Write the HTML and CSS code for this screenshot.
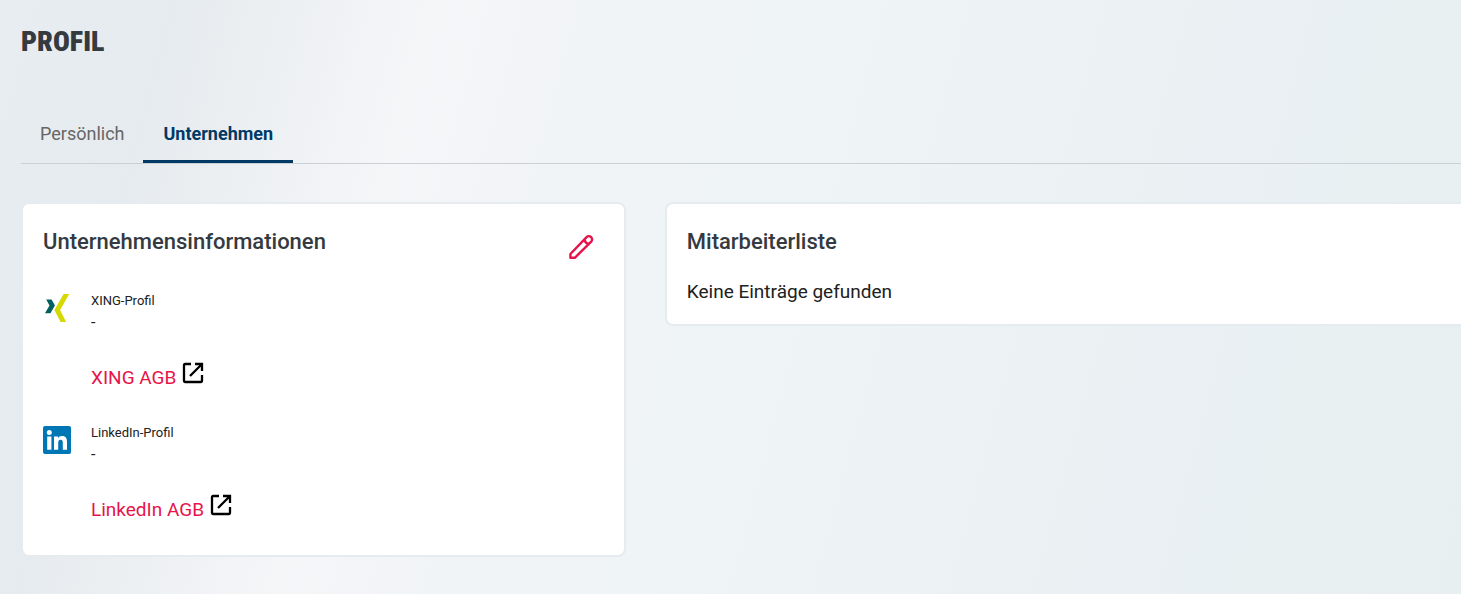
FILE: index.html
```html
<!DOCTYPE html>
<html lang="de">
<head>
    <meta charset="UTF-8" />
    <meta name="viewport" content="width=device-width, initial-scale=1.0" />
    <link rel="stylesheet" href="styles.css">
    <title>Profil</title>
</head>
<body>
    <main class="page">
        <h1>PROFIL</h1>

        <nav class="tabs">
            <a href="#persoenlich" class="tab">Persönlich</a>
            <a href="#unternehmen" class="tab active" aria-current="page">Unternehmen</a>
        </nav>

        <div class="cards">
            <section class="card">
                <div class="card-header">
                    <h2>Unternehmensinformationen</h2>
                    <button type="button" class="edit" aria-label="Bearbeiten">
                        <svg viewBox="0 0 26 26" width="26" height="26" fill="none" stroke="#e6144b" stroke-width="2.4" stroke-linejoin="round">
                            <path d="M2.4 20 L18.6 3.2 A3.1 3.1 0 0 1 23.2 7.6 L6.8 23.8 H2.4 Z" />
                            <path d="M16.4 5.4 Q17.2 9.2 21 10" />
                        </svg>
                    </button>
                </div>

                <div class="profile">
                    <svg class="logo" viewBox="0 0 28 30" width="28" height="30">
                        <path fill="#005f5f" d="M3.2 6.4 H8.6 L11.9 12.5 L7.4 20.3 H2 L6.5 12.5 Z" />
                        <path fill="#d5d900" d="M20.6 1 H26.2 L17.1 17 L23.1 29 H17.6 L11.4 17 Z" />
                    </svg>
                    <div class="profile-text">
                        <span class="label">XING-Profil</span>
                        <span class="value">-</span>
                        <a href="#xing-agb" class="terms">XING AGB<svg viewBox="0 0 22 22" width="22" height="22" fill="none" stroke="#000" stroke-width="2.3">
                                <path d="M9 2 H3 Q2 2 2 3 V19 Q2 20 3 20 H19 Q20 20 20 19 V13" />
                                <path d="M8 14 L19.5 2.5 M13 2 H20 V9" />
                            </svg></a>
                    </div>
                </div>

                <div class="profile">
                    <svg class="logo" viewBox="0 0 28 30" width="28" height="30">
                        <rect y="1" width="28" height="28" rx="2" fill="#0077b5" />
                        <circle cx="6.3" cy="7.6" r="2.5" fill="#fff" />
                        <path fill="#fff" d="M4.2 11.5 H8.4 V24.8 H4.2 Z M11 11.5 H15 V13.3 C15.7 12 17.2 11.1 19.1 11.1 C23.1 11.1 24 13.8 24 17.4 V24.8 H19.8 V18.3 C19.8 16.7 19.8 14.8 17.6 14.8 C15.5 14.8 15.2 16.5 15.2 18.2 V24.8 H11 Z" />
                    </svg>
                    <div class="profile-text">
                        <span class="label">LinkedIn-Profil</span>
                        <span class="value">-</span>
                        <a href="#linkedin-agb" class="terms">LinkedIn AGB<svg viewBox="0 0 22 22" width="22" height="22" fill="none" stroke="#000" stroke-width="2.3">
                                <path d="M9 2 H3 Q2 2 2 3 V19 Q2 20 3 20 H19 Q20 20 20 19 V13" />
                                <path d="M8 14 L19.5 2.5 M13 2 H20 V9" />
                            </svg></a>
                    </div>
                </div>
            </section>

            <section class="card card-list">
                <h2>Mitarbeiterliste</h2>
                <p>Keine Einträge gefunden</p>
            </section>
        </div>
    </main>
</body>
</html>
```
FILE: styles.css
```css
* {
    box-sizing: border-box;
    margin: 0;
    padding: 0;
}
body {
    min-height: 100vh;
    font-family: Roboto, sans-serif;
    color: #212121;
    background: linear-gradient(105deg, #e8edf1 0%, #e6ebef 11%, #f5f6f8 27%, #f1f4f7 36%, #eff4f6 50%, #edf3f4 64%, #eaf0f3 78%, #e7eff1 100%);
}
.page {
    padding: 24px 0 36px 21px;
}
h1 {
    font-family: "Roboto Condensed", "Liberation Sans Narrow", Roboto, sans-serif;
    font-size: 28px;
    line-height: 36px;
    font-weight: 900;
    color: #343a40;
}
.tabs {
    display: flex;
    margin-top: 44px;
    border-bottom: 1px solid #cbd0d4;
}
.tab {
    padding: 20px 19px 16px;
    border-bottom: 3px solid transparent;
    font-size: 18px;
    line-height: 20px;
    color: #666;
    text-decoration: none;
}
.tab.active {
    padding-left: 20px;
    padding-right: 20px;
    border-bottom-color: #003965;
    font-weight: 700;
    color: #003965;
}
.cards {
    display: grid;
    grid-template-columns: 42% 1fr;
    gap: 39px;
    align-items: start;
    margin-top: 38px;
}
.card {
    padding: 20px 20px 29px;
    border: 2px solid #e6ebef;
    border-radius: 8px;
    background: #fff;
}
.card-list {
    padding-bottom: 17px;
    border-right: 0;
    border-radius: 8px 0 0 8px;
}
.card-header {
    display: flex;
    justify-content: space-between;
    align-items: flex-start;
}
h2 {
    font-size: 22px;
    line-height: 36px;
    font-weight: 500;
    color: #343a40;
}
.card-list p {
    margin-top: 17px;
    font-size: 19px;
    line-height: 30px;
}
.edit {
    margin: 10px 10px 2px 0;
    border: none;
    background: none;
    cursor: pointer;
}
.edit svg,
.logo {
    display: block;
}
.profile {
    display: flex;
    align-items: flex-start;
    gap: 20px;
    margin-top: 31px;
}
.profile-text {
    display: flex;
    flex-direction: column;
    align-items: flex-start;
}
.label {
    font-size: 13px;
    line-height: 16px;
}
.value {
    font-size: 16px;
    line-height: 28px;
}
.terms {
    display: flex;
    gap: 6px;
    margin-top: 25px;
    font-size: 19px;
    line-height: 32px;
    color: #e6144b;
    text-decoration: none;
}
```
